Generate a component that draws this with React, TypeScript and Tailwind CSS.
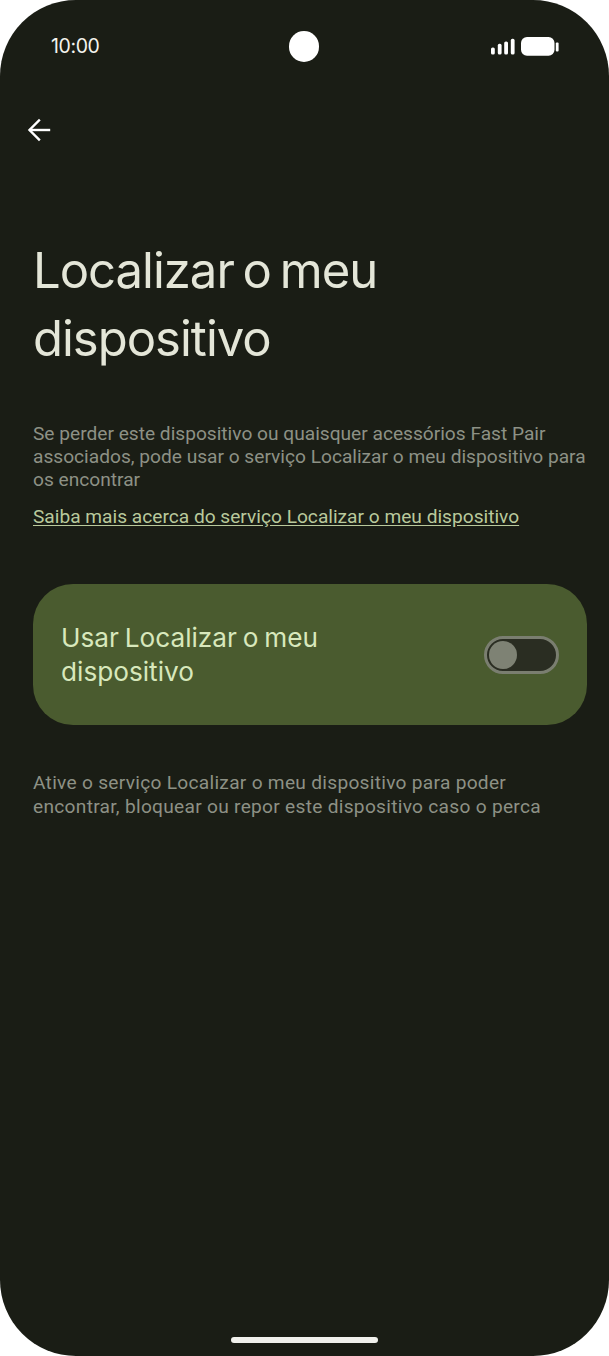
export default function App() {
  return (
    <div className="w-[609px] h-[1356px] bg-white overflow-hidden">
      <div className="relative w-[609px] h-[1356px] bg-[#1a1d15] rounded-[76px] flex flex-col font-['Roboto',sans-serif]">
        <div className="h-[92px] pl-[51px] pr-[50px] flex items-center justify-between shrink-0">
          <span className="text-[19.5px] leading-[20px] text-[#f4f4ee] font-['Inter',sans-serif] tracking-[-0.4px]">10:00</span>
          <div className="absolute left-[289px] top-[31px] w-[30px] h-[31px] rounded-full bg-white" />
          <div className="flex items-center gap-[6px]">
            <svg width="24" height="17" viewBox="0 0 24 17" fill="white">
              <rect x="0" y="9.5" width="3.8" height="7" rx="1.6" />
              <rect x="6.8" y="5.8" width="3.8" height="10.7" rx="1.6" />
              <rect x="13.2" y="3.5" width="3.8" height="13" rx="1.6" />
              <rect x="19.8" y="0.8" width="3.8" height="15.7" rx="1.6" />
            </svg>
            <svg width="38" height="19" viewBox="0 0 38 19" fill="white">
              <rect x="0" y="0" width="33.5" height="18.7" rx="6" />
              <rect x="34.8" y="5.5" width="2.8" height="9" rx="1" />
            </svg>
          </div>
        </div>

        <div className="h-[76px] pl-[27px] flex items-center shrink-0">
          <svg width="24" height="24" viewBox="0 0 24 24" fill="none" stroke="white" strokeWidth="2.4" strokeLinecap="square">
            <path d="M22 12H3.5" />
            <path d="M12 2.5 2.5 12l9.5 9.5" />
          </svg>
        </div>

        <div className="px-[33px] flex flex-col">
          <h1 className="mt-[69px] text-[49px] leading-[68px] text-[#e4e6d8] font-normal font-['Inter',sans-serif] tracking-[-1px] [word-spacing:-4px]">
            Localizar o meu dispositivo
          </h1>
          <p className="mt-[49px] text-[19.15px] leading-[23px] text-[#8d9185] w-[554px]">
            Se perder este dispositivo ou quaisquer acessórios Fast Pair associados, pode usar o serviço Localizar o meu dispositivo para os encontrar
          </p>
          <a className="mt-[14px] text-[19.15px] leading-[23px] text-[#b9c99c] underline underline-offset-2">
            Saiba mais acerca do serviço Localizar o meu dispositivo
          </a>
          <div className="mt-[56px] w-[554px] h-[141px] rounded-[40px] bg-[#4a5b2f] pl-[28px] pr-[28px] flex items-center justify-between">
            <span className="w-[320px] text-[26.2px] leading-[34px] text-[#d8e8bc] font-['Inter',sans-serif] [word-spacing:-1.5px]">
              Usar Localizar o meu dispositivo
            </span>
            <div className="w-[75px] h-[38px] rounded-full border-[3px] border-[#7a7e70] bg-[#2a2d22] flex items-center pl-[2px]">
              <div className="w-[28px] h-[28px] rounded-full bg-[#7e8274]" />
            </div>
          </div>
          <p className="mt-[46px] text-[19.15px] leading-[24px] tracking-[0.28px] text-[#8d9185] w-[530px]">
            Ative o serviço Localizar o meu dispositivo para poder encontrar, bloquear ou repor este dispositivo caso o perca
          </p>
        </div>

        <div className="absolute left-[231px] bottom-[13px] w-[147px] h-[6px] rounded-full bg-[#f1f1ec]" />
      </div>
    </div>
  );
}
